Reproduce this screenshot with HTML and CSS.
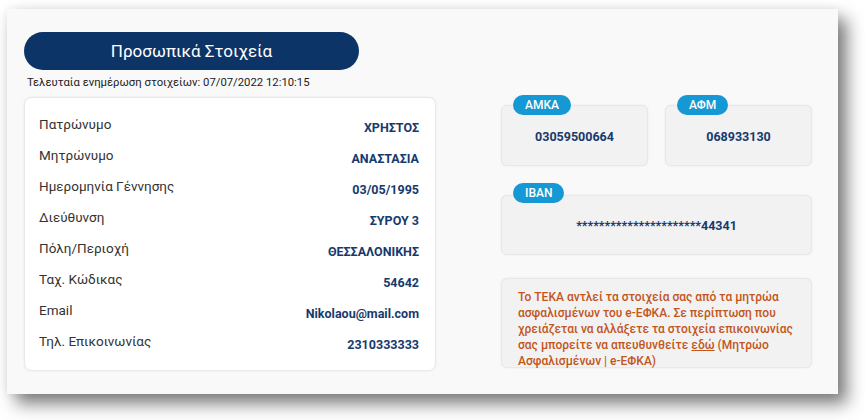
FILE: index.html
```html
<!DOCTYPE html>
<html lang="el">
<head>
<meta charset="utf-8">
<link rel="stylesheet" href="styles.css">
</head>
<body>
<div class="panel">
  <div class="left">
    <div class="pill">Προσωπικά Στοιχεία</div>
    <div class="updated">Τελευταία ενημέρωση στοιχείων: 07/07/2022 12:10:15</div>
    <div class="card">
      <div class="row"><span class="label">Πατρώνυμο</span><span class="value">ΧΡΗΣΤΟΣ</span></div>
      <div class="row"><span class="label">Μητρώνυμο</span><span class="value">ΑΝΑΣΤΑΣΙΑ</span></div>
      <div class="row"><span class="label">Ημερομηνία Γέννησης</span><span class="value">03/05/1995</span></div>
      <div class="row"><span class="label">Διεύθυνση</span><span class="value">ΣΥΡΟΥ 3</span></div>
      <div class="row"><span class="label">Πόλη/Περιοχή</span><span class="value">ΘΕΣΣΑΛΟΝΙΚΗΣ</span></div>
      <div class="row"><span class="label">Ταχ. Κώδικας</span><span class="value">54642</span></div>
      <div class="row"><span class="label">Email</span><span class="value">Nikolaou@mail.com</span></div>
      <div class="row"><span class="label">Τηλ. Επικοινωνίας</span><span class="value">2310333333</span></div>
    </div>
  </div>
  <div class="right">
    <div class="pair">
      <div class="field small"><span class="badge">ΑΜΚΑ</span><span class="fval">03059500664</span></div>
      <div class="field small"><span class="badge">ΑΦΜ</span><span class="fval">068933130</span></div>
    </div>
    <div class="field iban"><span class="badge">IBAN</span><span class="fval">**********************44341</span></div>
    <div class="note">Το ΤΕΚΑ αντλεί τα στοιχεία σας από τα μητρώα ασφαλισμένων του e-ΕΦΚΑ. Σε περίπτωση που χρειάζεται να αλλάξετε τα στοιχεία επικοινωνίας σας μπορείτε να απευθυνθείτε <span class="link">εδώ</span> (Μητρώο Ασφαλισμένων | e-ΕΦΚΑ)</div>
  </div>
</div>
</body>
</html>
```

FILE: styles.css
```css
* { box-sizing: border-box; }
html, body { margin: 0; padding: 0; background: #ffffff; }
body {
  font-family: Roboto, "Noto Sans", sans-serif;
  width: 865px;
  height: 420px;
  overflow: hidden;
  padding: 9px 0 0 7px;
}
.panel {
  width: 831px;
  height: 385px;
  background: #f9f9f9;
  box-shadow: 9px 10px 16px rgba(0,0,0,0.5), 0 0 10px rgba(0,0,0,0.08);
  display: flex;
  padding: 23px 0 0 17px;
}
.left { width: 411px; display: flex; flex-direction: column; }
.pill {
  width: 335px;
  height: 38px;
  background: #0c3466;
  border-radius: 19px;
  color: #fff;
  font-size: 17px;
  display: flex;
  align-items: center;
  justify-content: center;
}
.updated {
  font-size: 11.3px;
  color: #222;
  line-height: 16px;
  margin: 5px 0 7px 3px;
}
.card {
  margin-left: 1px;
  width: 410px;
  height: 272px;
  background: #fff;
  border-radius: 6px;
  box-shadow: 0 0 3px rgba(0,0,0,0.18);
  padding: 10px 16px 0 14px;
}
.row {
  height: 31px;
  display: flex;
  justify-content: space-between;
  align-items: center;
}
.label { font-size: 13.5px; color: #333; }
.value {
  font-size: 12.5px;
  font-weight: 700;
  color: #163a6d;
  margin-top: 7px;
}
.right {
  margin-left: 66px;
  width: 311px;
  padding-top: 73px;
  display: flex;
  flex-direction: column;
}
.pair { display: flex; gap: 17px; }
.field {
  position: relative;
  background: #f2f2f2;
  border: 1px solid #e8e8e8;
  border-radius: 6px;
  box-shadow: 0 0 2px rgba(0,0,0,0.08);
  display: flex;
  align-items: center;
  justify-content: center;
}
.field.small { width: 147px; height: 61px; }
.field.iban { width: 311px; height: 60px; margin-top: 29px; }
.badge {
  position: absolute;
  left: 11px;
  top: -11px;
  height: 20px;
  padding: 0 12px;
  background: #1598d4;
  color: #fff;
  border-radius: 10px;
  font-size: 12px;
  font-weight: 500;
  line-height: 20px;
}
.field.iban .badge { top: -13px; }
.fval {
  font-size: 12.5px;
  font-weight: 700;
  color: #163a6d;
  margin-top: 1px;
}
.note {
  margin-top: 23px;
  width: 311px;
  height: 90px;
  background: #f2f2f2;
  border: 1px solid #e8e8e8;
  border-radius: 6px;
  box-shadow: 0 0 2px rgba(0,0,0,0.08);
  padding: 10px 4px 0 16px;
  font-size: 12px;
  line-height: 16px;
  color: #c2561c;
  font-weight: 500;
}
.link { text-decoration: underline; }
```
